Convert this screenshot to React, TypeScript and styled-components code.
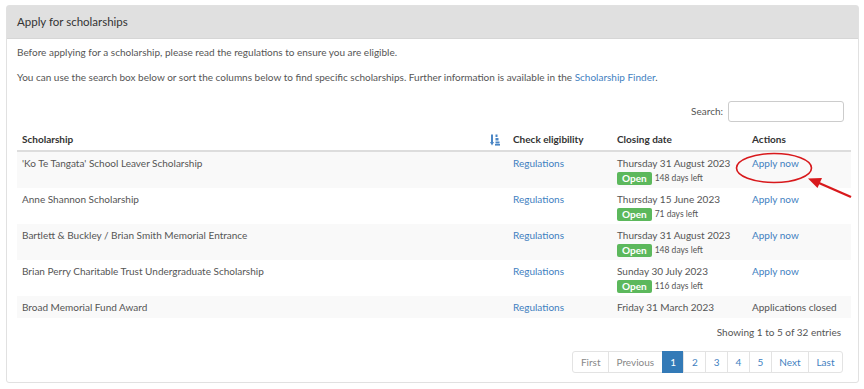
import styled, { createGlobalStyle } from 'styled-components'

const GlobalStyle = createGlobalStyle`
  html, body {
    margin: 0;
    padding: 0;
    background: #ffffff;
  }
  body {
    font-family: Lato, "Open Sans", "Liberation Sans", sans-serif;
    font-size: 10px;
    line-height: 15px;
    color: #555555;
  }
  * {
    box-sizing: border-box;
  }
`

type Row = {
  name: string
  date: string
  daysLeft?: string
  open: boolean
}

const rows: Row[] = [
  { name: "'Ko Te Tangata' School Leaver Scholarship", date: 'Thursday 31 August 2023', daysLeft: '148 days left', open: true },
  { name: 'Anne Shannon Scholarship', date: 'Thursday 15 June 2023', daysLeft: '71 days left', open: true },
  { name: 'Bartlett & Buckley / Brian Smith Memorial Entrance', date: 'Thursday 31 August 2023', daysLeft: '148 days left', open: true },
  { name: 'Brian Perry Charitable Trust Undergraduate Scholarship', date: 'Sunday 30 July 2023', daysLeft: '116 days left', open: true },
  { name: 'Broad Memorial Fund Award', date: 'Friday 31 March 2023', open: false }
]

const pages = [
  { label: 'First', state: 'disabled' },
  { label: 'Previous', state: 'disabled' },
  { label: '1', state: 'active' },
  { label: '2', state: 'link' },
  { label: '3', state: 'link' },
  { label: '4', state: 'link' },
  { label: '5', state: 'link' },
  { label: 'Next', state: 'link' },
  { label: 'Last', state: 'link' }
] as const

const SortIcon = () => (
  <svg width="10" height="12" viewBox="0 0 10 12">
    <path d="M2 0.5 V9" stroke="#4a86c5" strokeWidth="2" />
    <path d="M0 8 L2 11.5 L4 8 Z" fill="#4a86c5" />
    <rect x="5.5" y="0.5" width="2" height="2.5" fill="#4a86c5" />
    <rect x="5.5" y="4" width="3" height="2.5" fill="#4a86c5" />
    <rect x="5.5" y="7.5" width="4" height="2" fill="#4a86c5" />
    <rect x="5" y="10" width="5" height="1.6" fill="#4a86c5" />
  </svg>
)

const App = () => {
  return (
    <StyledPage>
      <GlobalStyle />
      <StyledPanel>
        <StyledPanelHeading>Apply for scholarships</StyledPanelHeading>
        <StyledPanelBody>
          <StyledText>Before applying for a scholarship, please read the regulations to ensure you are eligible.</StyledText>
          <StyledText>
            You can use the search box below or sort the columns below to find specific scholarships. Further information is
            available in the <StyledLink>Scholarship Finder</StyledLink>.
          </StyledText>
          <StyledSearchRow>
            <label htmlFor="search">Search:</label>
            <StyledSearchInput id="search" type="search" />
          </StyledSearchRow>
          <StyledTable>
            <colgroup>
              <col style={{ width: 491 }} />
              <col style={{ width: 104 }} />
              <col style={{ width: 135 }} />
              <col style={{ width: 104 }} />
            </colgroup>
            <thead>
              <tr>
                <StyledTh>
                  <StyledSortHead>
                    Scholarship
                    <SortIcon />
                  </StyledSortHead>
                </StyledTh>
                <StyledTh>Check eligibility</StyledTh>
                <StyledTh>Closing date</StyledTh>
                <StyledTh>Actions</StyledTh>
              </tr>
            </thead>
            <tbody>
              {rows.map((row, i) => (
                <StyledTr key={row.name} $striped={i % 2 === 0}>
                  <StyledTd>{row.name}</StyledTd>
                  <StyledTd>
                    <StyledLink>Regulations</StyledLink>
                  </StyledTd>
                  <StyledTd>
                    <div>{row.date}</div>
                    {row.open && (
                      <StyledStatus>
                        <StyledBadge>Open</StyledBadge>
                        <StyledDaysLeft>{row.daysLeft}</StyledDaysLeft>
                      </StyledStatus>
                    )}
                  </StyledTd>
                  <StyledTd>{row.open ? <StyledLink>Apply now</StyledLink> : 'Applications closed'}</StyledTd>
                </StyledTr>
              ))}
            </tbody>
          </StyledTable>
          <StyledInfo>Showing 1 to 5 of 32 entries</StyledInfo>
          <StyledPagination>
            {pages.map((p) => (
              <StyledPageItem key={p.label} $state={p.state}>
                {p.label}
              </StyledPageItem>
            ))}
          </StyledPagination>
        </StyledPanelBody>
      </StyledPanel>
      <StyledAnnotation width="864" height="389" viewBox="0 0 864 389">
        <ellipse cx="774" cy="168" rx="37.5" ry="14.5" fill="none" stroke="#d8191c" strokeWidth="1.6" />
        <path d="M851 197 L819 183" stroke="#d8191c" strokeWidth="2.4" />
        <path d="M808 178.5 L822 178 L817.5 188 Z" fill="#d8191c" />
      </StyledAnnotation>
    </StyledPage>
  )
}

export default App

const StyledPage = styled.div`
  position: relative;
  width: 864px;
  height: 389px;
  padding: 5px 5px 0 6px;
`

const StyledPanel = styled.section`
  width: 853px;
  border: 1px solid #e1e1e1;
  border-radius: 3px;
  background: #ffffff;
`

const StyledPanelHeading = styled.h2`
  margin: 0;
  height: 33px;
  padding: 0 10px;
  background: #e0e0e0;
  border-bottom: 1px solid #d6d6d6;
  font-size: 11.5px;
  font-weight: 400;
  line-height: 32px;
  color: #333333;
`

const StyledPanelBody = styled.div`
  display: flex;
  flex-direction: column;
  padding: 6px 9px 9px 10px;
`

const StyledText = styled.p`
  margin: 0 0 10px;
`

const StyledLink = styled.a`
  color: #3f7fbf;
  text-decoration: none;
  cursor: pointer;
`

const StyledSearchRow = styled.div`
  display: flex;
  justify-content: flex-end;
  align-items: center;
  gap: 5px;
  margin: 6px 5px 6px 0;
`

const StyledSearchInput = styled.input`
  width: 116px;
  height: 21px;
  border: 1px solid #cccccc;
  border-radius: 3px;
  padding: 0 5px;
  font: inherit;
`

const StyledTable = styled.table`
  width: 834px;
  border-collapse: collapse;
  table-layout: fixed;
`

const StyledTh = styled.th`
  text-align: left;
  font-weight: 700;
  color: #333333;
  padding: 4px 5px 3px;
  border-bottom: 2px solid #dddddd;
`

const StyledSortHead = styled.div`
  display: flex;
  justify-content: space-between;
  align-items: center;
  padding-right: 3px;
`

const StyledTr = styled.tr<{ $striped: boolean }>`
  background: ${({ $striped }) => ($striped ? '#f9f9f9' : '#ffffff')};
  & + & td {
    border-top: 1px solid #dddddd;
  }
`

const StyledTd = styled.td`
  vertical-align: top;
  padding: 4px 5px 3px;
`

const StyledStatus = styled.div`
  display: flex;
  align-items: center;
  gap: 3px;
  height: 14px;
`

const StyledBadge = styled.span`
  display: inline-block;
  background: #5cb85c;
  color: #ffffff;
  font-weight: 700;
  font-size: 10px;
  line-height: 13px;
  padding: 0 5px;
  border-radius: 2px;
`

const StyledDaysLeft = styled.span`
  font-size: 8.5px;
  color: #555555;
`

const StyledInfo = styled.div`
  align-self: flex-end;
  margin: 7px 8px 11px 0;
`

const StyledPagination = styled.ul`
  display: flex;
  align-self: flex-end;
  margin: 0 6px 0 0;
  padding: 0;
  list-style: none;
`

const StyledPageItem = styled.li<{ $state: 'disabled' | 'active' | 'link' }>`
  height: 22px;
  line-height: 20px;
  padding: 0 7.5px;
  border: 1px solid ${({ $state }) => ($state === 'active' ? '#337ab7' : '#e3e3e3')};
  margin-left: -1px;
  background: ${({ $state }) => ($state === 'active' ? '#337ab7' : '#ffffff')};
  color: ${({ $state }) => ($state === 'active' ? '#ffffff' : $state === 'disabled' ? '#888888' : '#3f7fbf')};
  &:first-child {
    margin-left: 0;
    border-radius: 3px 0 0 3px;
  }
  &:last-child {
    border-radius: 0 3px 3px 0;
  }
`

const StyledAnnotation = styled.svg`
  position: absolute;
  left: 0;
  top: 0;
  pointer-events: none;
`
